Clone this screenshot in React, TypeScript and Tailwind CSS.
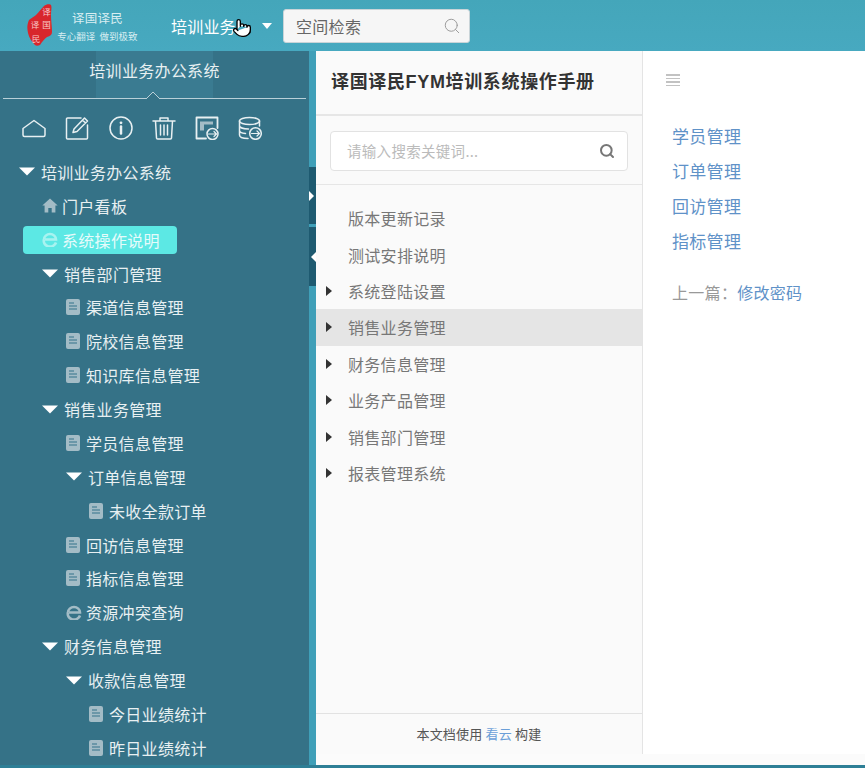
import { Pointer, Search } from "lucide-react";

const CJK = "font-['Noto_Sans_CJK_SC','Noto_Sans',sans-serif]";

type Kind = "caret" | "doc" | "ie" | "home";

const tree: { label: string; kind: Kind; level: 0 | 1 | 2 | 3; active?: boolean }[] = [
    { label: "培训业务办公系统", kind: "caret", level: 0 },
    { label: "门户看板", kind: "home", level: 1 },
    { label: "系统操作说明", kind: "ie", level: 1, active: true },
    { label: "销售部门管理", kind: "caret", level: 1 },
    { label: "渠道信息管理", kind: "doc", level: 2 },
    { label: "院校信息管理", kind: "doc", level: 2 },
    { label: "知识库信息管理", kind: "doc", level: 2 },
    { label: "销售业务管理", kind: "caret", level: 1 },
    { label: "学员信息管理", kind: "doc", level: 2 },
    { label: "订单信息管理", kind: "caret", level: 2 },
    { label: "未收全款订单", kind: "doc", level: 3 },
    { label: "回访信息管理", kind: "doc", level: 2 },
    { label: "指标信息管理", kind: "doc", level: 2 },
    { label: "资源冲突查询", kind: "ie", level: 2 },
    { label: "财务信息管理", kind: "caret", level: 1 },
    { label: "收款信息管理", kind: "caret", level: 2 },
    { label: "今日业绩统计", kind: "doc", level: 3 },
    { label: "昨日业绩统计", kind: "doc", level: 3 },
];

const indent = {
    0: "pl-[19px]",
    1: "pl-[42px]",
    2: "pl-[66px]",
    3: "pl-[89px]",
};

const manual = [
    { label: "版本更新记录" },
    { label: "测试安排说明" },
    { label: "系统登陆设置", arrow: true },
    { label: "销售业务管理", arrow: true, selected: true },
    { label: "财务信息管理", arrow: true },
    { label: "业务产品管理", arrow: true },
    { label: "销售部门管理", arrow: true },
    { label: "报表管理系统", arrow: true },
];

function Caret() {
    return (
        <svg width="16" height="9" viewBox="0 0 16 9" className="shrink-0">
            <path d="M0 0.5h16L8 8.5z" fill="#fff" />
        </svg>
    );
}

function TreeIcon({ kind, active }: { kind: Kind; active?: boolean }) {
    if (kind === "caret") return <Caret />;
    if (kind === "home") {
        return (
            <svg width="16" height="15" viewBox="0 0 16 15" className="shrink-0">
                <path d="M8 0.5 0.3 7.6h2.3V14.5h3.7V10h3.4v4.5h3.7V7.6h2.3z" fill="#a3bcc6" />
            </svg>
        );
    }
    if (kind === "ie") {
        return (
            <svg width="16" height="15" viewBox="0 0 16 15" className="shrink-0">
                <path
                    d="M2 7.500a6 5.500 0 0 1 12 0H3M14 10.500a6.200 5.600 0 0 1-12-3"
                    fill="none"
                    stroke={active ? "#a8f3f0" : "#a3bcc6"}
                    strokeWidth="2.600"
                />
            </svg>
        );
    }
    return (
        <svg width="14" height="16" viewBox="0 0 14 16" className="shrink-0">
            <rect width="14" height="16" rx="2" fill="#a3bcc6" />
            <path d="M3 4h5M3 7h8M3 10h8" stroke="#35728a" strokeWidth="1.200" />
        </svg>
    );
}

function ToolIcon({ name }: { name: string }) {
    const common = {
        width: 24,
        height: 24,
        viewBox: "0 0 24 24",
        fill: "none",
        stroke: "#e8f0f2",
        strokeWidth: 1.5,
        strokeLinecap: "round" as const,
        strokeLinejoin: "round" as const,
    };
    switch (name) {
        case "home":
            return (
                <svg {...common}>
                    <path d="M1 12.500 12 4.500l11 8v6.500a1.500 1.500 0 0 1-1.500 1.500h-19A1.500 1.500 0 0 1 1 19z" />
                </svg>
            );
        case "edit":
            return (
                <svg {...common}>
                    <path d="M16 2H2.500A1 1 0 0 0 1.500 3v19a1 1 0 0 0 1 1h19a1 1 0 0 0 1-1V9" />
                    <path d="m8 16.500 1-3.500L19.500 2l3 3L12 15.500zM17.500 4l3 3" />
                </svg>
            );
        case "info":
            return (
                <svg {...common}>
                    <circle cx="12" cy="12" r="11" />
                    <path d="M12 10.500v7" strokeWidth="2.500" />
                    <circle cx="12" cy="6.800" r="1.400" fill="#e8f0f2" stroke="none" />
                </svg>
            );
        case "trash":
            return (
                <svg {...common}>
                    <path d="M1 5h22M8 5V2h8v3M3.500 5l1 17a1.500 1.500 0 0 0 1.500 1h12a1.500 1.500 0 0 0 1.500-1l1-17" />
                    <path d="M8.500 9v10M12 9v10M15.500 9v10" />
                </svg>
            );
        case "report":
            return (
                <svg {...common}>
                    <path d="M11 22.500H1.500V1.500h21V12" strokeWidth="1.800" />
                    <path d="M5 5.500h13v3H9v6H5z" fill="#a3bcc6" stroke="none" />
                    <circle cx="17.500" cy="18" r="5.500" />
                    <path d="M13.500 18h8M19 15.500l2.500 2.500-2.500 2.500" strokeWidth="1.200" />
                </svg>
            );
        default:
            return (
                <svg {...common}>
                    <ellipse cx="11.500" cy="5" rx="10" ry="3.500" />
                    <path d="M1.500 5v14c0 2 3.500 3.500 8.500 3.500M21.500 5v5M1.500 9.800c0 1.800 4 3.200 9 3.200M1.500 14.500c0 1.500 2.500 2.700 6 3" />
                    <circle cx="17.500" cy="17.500" r="5.800" />
                    <path d="M13.500 17.500h8M19 15l2.500 2.500L19 20" strokeWidth="1.200" />
                </svg>
            );
    }
}

function Seal() {
    return (
        <svg width="26" height="44" viewBox="0 0 26 44" className="shrink-0">
            <path d="M17 2c2-2 6-2.500 7-1 1 2 0 6 0 10 0 6 1 12 1 17 0 3-2 4-5 5-3 2-5 5-7 8-2 1-4 1-5 0C5 38 2 34 1 29 0 24 0 21 2 16c2-2 5-3 7-5 3-3 5-6 8-9z" fill="#d8262c" />
            <text x="19.500" y="10.500" fontSize="8.500" fill="#f8c9c9" textAnchor="middle" fontFamily="Noto Sans CJK SC">译</text>
            <text x="19.500" y="24" fontSize="8.500" fill="#f8c9c9" textAnchor="middle" fontFamily="Noto Sans CJK SC">国</text>
            <text x="8" y="23.500" fontSize="8.500" fill="#f8c9c9" textAnchor="middle" fontFamily="Noto Sans CJK SC">译</text>
            <text x="9" y="37.500" fontSize="8.500" fill="#f8c9c9" textAnchor="middle" fontFamily="Noto Sans CJK SC">民</text>
        </svg>
    );
}

function Header() {
    return (
        <header className="relative flex h-[51px] shrink-0 items-center bg-gradient-to-b from-[#44a6ba] to-[#47a9c0] pl-[27px]">
            <Seal />
            <div className="ml-[3px] flex w-[83px] shrink-0 flex-col items-center text-[#d9eef2]">
                <span className="text-[12.5px] leading-[16px] tracking-[0.2px]">译国译民</span>
                <span className="mt-[4px] whitespace-nowrap text-[9.5px] leading-[12px]">专心翻译&nbsp;&nbsp;做到极致</span>
            </div>
            <span className="ml-[32px] w-[80px] shrink-0 whitespace-nowrap text-[16px] tracking-[0.2px] text-white">培训业务</span>
            <svg width="10" height="6" viewBox="0 0 10 6" className="ml-[11px] shrink-0">
                <path d="M0 0h10L5 6z" fill="#fff" />
            </svg>
            <div className="ml-[11px] flex h-[34px] w-[187px] shrink-0 items-center justify-between rounded-[3px] border border-[#c9d4d8] bg-[#f6f6f6] pl-[12px] pr-[8px]">
                <span className="text-[16px] tracking-[0.3px] text-[#666]">空间检索</span>
                <Search size={18} strokeWidth={1.3} className="text-[#9a9a9a]" />
            </div>
            <Pointer size={20} strokeWidth={1.6} fill="#fff" className="absolute left-[232px] top-[18px] text-black" />
        </header>
    );
}

function Sidebar() {
    return (
        <aside className="flex w-[309px] shrink-0 flex-col overflow-hidden bg-[#357287] text-[#e8f0f2]">
            <div className="relative mx-[3px] flex h-[48px] shrink-0 items-start justify-center border-b border-[#b9d0d8] pt-[7px]">
                <div className="absolute inset-y-0 left-[93px] w-[117px] bg-[#3a7b91]" />
                <span className="relative text-[16px] leading-[24px] tracking-[0.3px]">培训业务办公系统</span>
                <svg width="14" height="7" viewBox="0 0 14 7" className="absolute bottom-[-1px] left-[143px]">
                    <path d="M0 7 7 0l7 7" fill="#357287" stroke="#b9d0d8" />
                </svg>
            </div>
            <div className="mt-[17px] flex h-[24px] shrink-0 gap-[19.300px] pl-[22px]">
                {["home", "edit", "info", "trash", "report", "db"].map((n) => (
                    <ToolIcon key={n} name={n} />
                ))}
            </div>
            <ul className="mt-[15px]">
                {tree.map((item) =>
                    item.active ? (
                        <li key={item.label} className="flex h-[33.880px] items-center pl-[23px]">
                            <div className="flex h-[28px] w-[154px] items-center gap-[4px] rounded-[4px] bg-[#5ce8e4] pl-[19px]">
                                <TreeIcon kind={item.kind} active />
                                <span className="text-[16px] tracking-[0.3px] text-[#e6fbfb]">{item.label}</span>
                            </div>
                        </li>
                    ) : (
                        <li
                            key={item.label}
                            className={`flex h-[33.880px] items-center ${item.kind === "ie" || item.kind === "home" ? "gap-[4px]" : "gap-[6px]"} ${indent[item.level]}`}
                        >
                            <TreeIcon kind={item.kind} />
                            <span className="whitespace-nowrap text-[16px] tracking-[0.3px]">{item.label}</span>
                        </li>
                    )
                )}
            </ul>
        </aside>
    );
}

function Strip() {
    return (
        <div className="relative w-[7px] shrink-0 bg-[#3f9fb8]">
            <div className="absolute left-0 top-[116px] flex h-[57px] w-full items-center bg-[#1e5a70]">
                <svg width="5" height="10" viewBox="0 0 5 10">
                    <path d="M0 0l5 5-5 5z" fill="#fff" />
                </svg>
            </div>
            <div className="absolute left-0 top-[176px] flex h-[59px] w-full items-center justify-end bg-[#1e5a70]">
                <svg width="5" height="10" viewBox="0 0 5 10">
                    <path d="M5 0 0 5l5 5z" fill="#fff" />
                </svg>
            </div>
        </div>
    );
}

function Manual() {
    return (
        <section className="flex w-[327px] shrink-0 flex-col border-r border-[#e4e4e4] bg-[#fafafa]">
            <div className="flex h-[65px] shrink-0 items-center border-b-2 border-[#e6e6e6] pl-[15px]">
                <h1 className="whitespace-nowrap font-['Liberation_Sans','Noto_Sans_CJK_SC',sans-serif] text-[18px] font-bold tracking-[0.65px] text-[#333]">译国译民FYM培训系统操作手册</h1>
            </div>
            <div className="flex h-[69px] shrink-0 items-center border-b border-[#e6e6e6] px-[14px] pt-[2px]">
                <div className="flex h-[40px] w-full items-center justify-between rounded-[4px] border border-[#e2e2e2] bg-white pl-[16px] pr-[12px]">
                    <span className="text-[14.500px] tracking-[0.3px] text-[#bbb]">请输入搜索关键词...</span>
                    <Search size={16} strokeWidth={3} className="text-[#777]" />
                </div>
            </div>
            <ul className="flex-1 pt-[15px]">
                {manual.map((m) => (
                    <li
                        key={m.label}
                        className={`relative flex h-[36.400px] items-center pl-[32px] text-[16px] tracking-[0.3px] text-[#777] ${m.selected ? "bg-[#e5e5e5]" : ""}`}
                    >
                        {m.arrow && (
                            <svg width="6" height="10" viewBox="0 0 6 10" className="absolute left-[10px]">
                                <path d="M0 0l6 5-6 5z" fill="#333" />
                            </svg>
                        )}
                        {m.label}
                    </li>
                ))}
            </ul>
            <div className="flex h-[41px] shrink-0 items-center justify-center border-t border-[#e2e2e2] text-[13px] tracking-[0.2px] text-[#555]">
                本文档使用&nbsp;<span className="text-[#6b9fd8]">看云</span>&nbsp;构建
            </div>
        </section>
    );
}

function Content() {
    const links = ["学员管理", "订单管理", "回访管理", "指标管理"];
    return (
        <main className="flex-1 overflow-hidden bg-white pl-[29px] pt-[23px]">
            <div className="ml-[-6px] flex w-[14px] flex-col gap-[2px]">
                {[0, 1, 2, 3].map((i) => (
                    <div key={i} className="h-[1.500px] bg-[#c2c2c2]" />
                ))}
            </div>
            <ul className="mt-[32px]">
                {links.map((l) => (
                    <li key={l} className="flex h-[35px] items-center whitespace-nowrap text-[17px] tracking-[0.3px] text-[#5f92c8]">
                        {l}
                    </li>
                ))}
            </ul>
            <p className="mt-[22px] whitespace-nowrap text-[16px] tracking-[0.3px] text-[#999]">
                上一篇：<span className="text-[#5f92c8]">修改密码</span>
            </p>
        </main>
    );
}

export default function App() {
    return (
        <div className={`flex h-[768px] w-[865px] flex-col overflow-hidden bg-[#2e7f96] ${CJK}`}>
            <Header />
            <div className="flex h-[714px] shrink-0">
                <Sidebar />
                <Strip />
                <div className="flex flex-1 flex-col bg-[#fbfbfb]">
                    <div className="flex h-[703px] shrink-0">
                        <Manual />
                        <Content />
                    </div>
                </div>
            </div>
        </div>
    );
}
